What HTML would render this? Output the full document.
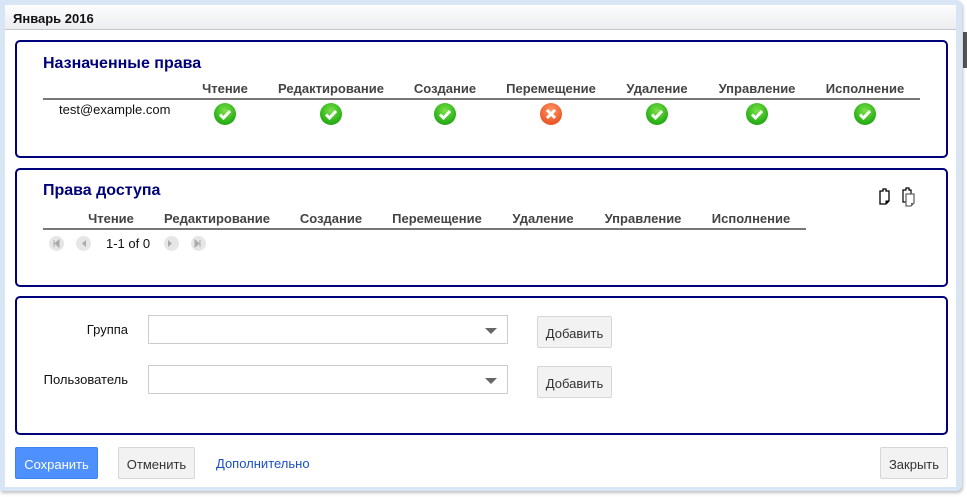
<!DOCTYPE html>
<html><head><meta charset="utf-8"><style>
*{margin:0;padding:0;box-sizing:border-box}
body{width:967px;height:497px;background:#fff;font-family:"Liberation Sans",Arial,sans-serif;position:relative;overflow:hidden;font-size:13px;color:#222}
.abs{position:absolute}
#dlg{left:0;top:0;width:962px;height:491px;background:#d7e5f4;border-radius:0 6px 6px 0;box-shadow:1px 2px 3px rgba(0,0,0,.25)}
#inner{left:5px;top:5px;width:951px;height:482px;background:#fff}
#hdr{left:5px;top:5px;width:951px;height:25px;background:linear-gradient(#fdfdfd,#ebedf0);border-bottom:1px solid #c3c6cc;font-weight:bold;font-size:13px;color:#111;padding:6px 0 0 8px}
.panel{position:absolute;left:15px;width:933px;border:2px solid #00007a;border-radius:5px;background:#fff}
.title{position:absolute;left:43px;font-size:16px;font-weight:bold;color:#00007a}
.th{position:absolute;font-weight:bold;font-size:13px;color:#444;transform:translateX(-50%);white-space:nowrap}
.line{position:absolute;height:2px;background:#777}
.ic{position:absolute;width:22px;height:22px;border-radius:50%}
.ok{background:radial-gradient(circle at 50% 35%,#7ee04a,#2fb51a 60%,#1f8f12)}
.no{background:radial-gradient(circle at 50% 35%,#ff9a6a,#f06030 60%,#d84518)}
.ic svg{position:absolute;left:0;top:0}
.pg{position:absolute;width:15px;height:15px;border-radius:50%;background:#e6e6e6;top:236px}
.btn{position:absolute;background:#f2f2f2;border:1px solid #d6d6d6;border-radius:2px;font-size:13px;color:#333;text-align:center}
.sel{position:absolute;left:148px;width:360px;height:29px;border:1px solid #ccc;background:#fff}
.sel:after{content:"";position:absolute;right:10px;top:12px;border-left:6px solid transparent;border-right:6px solid transparent;border-top:6px solid #666}
.lbl{position:absolute;font-size:13px;color:#111;text-align:right;width:100px}
</style></head><body>
<div class="abs" style="left:963px;top:32px;width:4px;height:36px;background:#555"></div>
<div id="dlg" class="abs"></div>
<div id="inner" class="abs"></div>
<div id="hdr" class="abs">Январь 2016</div>

<div class="panel" style="top:40px;height:118px"></div>
<div class="title" style="top:55px">Назначенные права</div>
<div class="th" style="left:225px;top:81px">Чтение</div>
<div class="th" style="left:331px;top:81px">Редактирование</div>
<div class="th" style="left:445px;top:81px">Создание</div>
<div class="th" style="left:551px;top:81px">Перемещение</div>
<div class="th" style="left:657px;top:81px">Удаление</div>
<div class="th" style="left:757px;top:81px">Управление</div>
<div class="th" style="left:865px;top:81px">Исполнение</div>
<div class="line" style="left:43px;top:98px;width:877px"></div>
<div class="abs" style="left:59px;top:102px;font-size:13px;color:#111">test@example.com</div>
<div class="ic ok" style="left:214px;top:103px"><svg width="22" height="22"><path d="M6 11.5l3.5 3.5 6.5-7" stroke="#fff" stroke-width="3" fill="none"/></svg></div>
<div class="ic ok" style="left:320px;top:103px"><svg width="22" height="22"><path d="M6 11.5l3.5 3.5 6.5-7" stroke="#fff" stroke-width="3" fill="none"/></svg></div>
<div class="ic ok" style="left:434px;top:103px"><svg width="22" height="22"><path d="M6 11.5l3.5 3.5 6.5-7" stroke="#fff" stroke-width="3" fill="none"/></svg></div>
<div class="ic no" style="left:540px;top:103px"><svg width="22" height="22"><path d="M7 7l8 8M15 7l-8 8" stroke="#fff" stroke-width="3" fill="none"/></svg></div>
<div class="ic ok" style="left:646px;top:103px"><svg width="22" height="22"><path d="M6 11.5l3.5 3.5 6.5-7" stroke="#fff" stroke-width="3" fill="none"/></svg></div>
<div class="ic ok" style="left:746px;top:103px"><svg width="22" height="22"><path d="M6 11.5l3.5 3.5 6.5-7" stroke="#fff" stroke-width="3" fill="none"/></svg></div>
<div class="ic ok" style="left:854px;top:103px"><svg width="22" height="22"><path d="M6 11.5l3.5 3.5 6.5-7" stroke="#fff" stroke-width="3" fill="none"/></svg></div>

<div class="panel" style="top:168px;height:119px"></div>
<div class="title" style="top:182px">Права доступа</div>
<svg class="abs" style="left:878px;top:187px" width="40" height="20"><path d="M2 4h3v-2h3v2h3v10l-3 3h-6z" fill="#fff" stroke="#000" stroke-width="1.3"/><path d="M8 17v-3h3" fill="#000" stroke="#000"/><path d="M25 3h3v-2h3v2h2v12h-8z" fill="#fff" stroke="#000" stroke-width="1.2"/><path d="M28 7h8v9l-3 3h-5z" fill="#fff" stroke="#666" stroke-width="1.3"/><path d="M33 19v-3h3" fill="#666"/></svg>
<div class="th" style="left:111px;top:211px">Чтение</div>
<div class="th" style="left:217px;top:211px">Редактирование</div>
<div class="th" style="left:331px;top:211px">Создание</div>
<div class="th" style="left:437px;top:211px">Перемещение</div>
<div class="th" style="left:543px;top:211px">Удаление</div>
<div class="th" style="left:643px;top:211px">Управление</div>
<div class="th" style="left:751px;top:211px">Исполнение</div>
<div class="line" style="left:43px;top:228px;width:763px"></div>
<div class="pg" style="left:49px"></div>
<div class="pg" style="left:76px"></div>
<div class="abs" style="left:106px;top:236px;font-size:13px;color:#111">1-1 of 0</div>
<div class="pg" style="left:164px"></div>
<div class="pg" style="left:191px"></div>
<svg class="abs" style="left:49px;top:236px" width="160" height="15"><path d="M5 4v7M6 7.5l4-3.5v7z" stroke="#aaa" fill="#aaa"/><path d="M33 7.5l4-3.5v7z" fill="#aaa"/><path d="M119 4v7l4-3.5z" fill="#aaa"/><path d="M146 4v7l4-3.5zM151 4v7" stroke="#aaa" fill="#aaa"/></svg>

<div class="panel" style="top:296px;height:139px"></div>
<div class="lbl" style="left:28px;top:322px">Группа</div>
<div class="sel" style="top:315px"></div>
<div class="btn" style="left:537px;top:316px;width:75px;height:32px;padding-top:9px">Добавить</div>
<div class="lbl" style="left:28px;top:372px">Пользователь</div>
<div class="sel" style="top:365px"></div>
<div class="btn" style="left:537px;top:366px;width:75px;height:32px;padding-top:9px">Добавить</div>

<div class="btn" style="left:15px;top:447px;width:83px;height:32px;padding-top:9px;background:#4d90fe;border-color:#3c82f0;color:#fff">Сохранить</div>
<div class="btn" style="left:118px;top:447px;width:77px;height:32px;padding-top:9px">Отменить</div>
<div class="abs" style="left:216px;top:456px;color:#1a4fc4;font-size:13px">Дополнительно</div>
<div class="btn" style="left:880px;top:447px;width:68px;height:32px;padding-top:9px">Закрыть</div>
</body></html>
